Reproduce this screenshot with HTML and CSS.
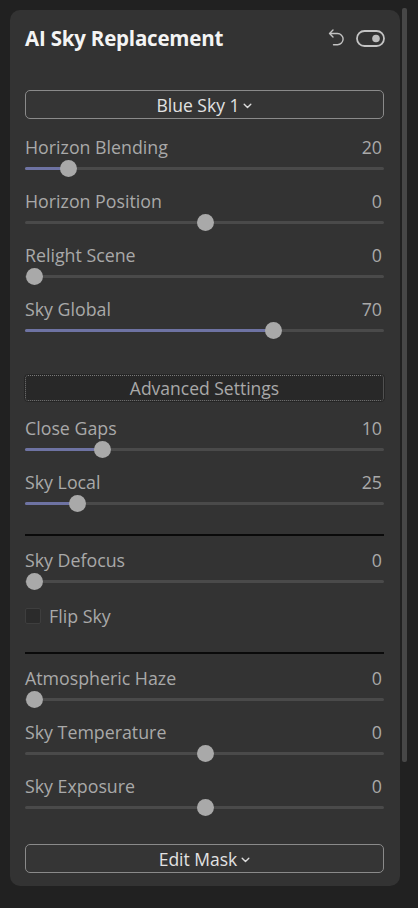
FILE: index.html
```html
<!DOCTYPE html>
<html>
<head>
<meta charset="utf-8">
<link rel="stylesheet" href="styles.css">
</head>
<body>
<div class="shell">
  <div class="panel">
    <div class="header">
      <div class="title">AI Sky Replacement</div>
      <div class="header-icons">
        <svg class="undo" width="18" height="20" viewBox="0 0 18 20"><path d="M6 2 L2.5 5.5 L6 9 M2.5 5.5 H10.5 A5.6 5.6 0 0 1 10.5 16.7 H6.5" fill="none" stroke="#c2c2c2" stroke-width="1.4" stroke-linecap="round" stroke-linejoin="round"/></svg>
        <svg class="toggle" width="29" height="17" viewBox="0 0 29 17"><rect x="1" y="1" width="27" height="15" rx="7.5" fill="none" stroke="#c4c4c4" stroke-width="1.8"/><circle cx="20" cy="8.5" r="3.8" fill="#bdbdbd"/></svg>
      </div>
    </div>

    <div class="btn dropdown first">Blue Sky 1<svg class="chev" width="9" height="6" viewBox="0 0 9 6"><path d="M1.2 1.2 L4.5 4.5 L7.8 1.2" fill="none" stroke="#dcdcdc" stroke-width="1.4" stroke-linecap="round" stroke-linejoin="round"/></svg></div>

    <div class="group g1">
      <div class="slider">
        <div class="row"><span>Horizon Blending</span><span>20</span></div>
        <div class="track"><div class="fill" style="width:43px"></div><div class="thumb" style="left:35px"></div></div>
      </div>
      <div class="slider">
        <div class="row"><span>Horizon Position</span><span>0</span></div>
        <div class="track"><div class="thumb" style="left:172px"></div></div>
      </div>
      <div class="slider">
        <div class="row"><span>Relight Scene</span><span>0</span></div>
        <div class="track"><div class="thumb" style="left:1px"></div></div>
      </div>
      <div class="slider">
        <div class="row"><span>Sky Global</span><span>70</span></div>
        <div class="track"><div class="fill" style="width:248px"></div><div class="thumb" style="left:240px"></div></div>
      </div>
    </div>

    <div class="btn advanced">Advanced Settings</div>

    <div class="group g2">
      <div class="slider">
        <div class="row"><span>Close Gaps</span><span>10</span></div>
        <div class="track"><div class="fill" style="width:77px"></div><div class="thumb" style="left:69px"></div></div>
      </div>
      <div class="slider">
        <div class="row"><span>Sky Local</span><span>25</span></div>
        <div class="track"><div class="fill" style="width:52px"></div><div class="thumb" style="left:44px"></div></div>
      </div>
    </div>

    <div class="divider d1"></div>

    <div class="group g3">
      <div class="slider">
        <div class="row"><span>Sky Defocus</span><span>0</span></div>
        <div class="track"><div class="thumb" style="left:1px"></div></div>
      </div>
    </div>

    <label class="check"><span class="box"></span><span>Flip Sky</span></label>

    <div class="divider d2"></div>

    <div class="group g4">
      <div class="slider">
        <div class="row"><span>Atmospheric Haze</span><span>0</span></div>
        <div class="track"><div class="thumb" style="left:1px"></div></div>
      </div>
      <div class="slider">
        <div class="row"><span>Sky Temperature</span><span>0</span></div>
        <div class="track"><div class="thumb" style="left:172px"></div></div>
      </div>
      <div class="slider">
        <div class="row"><span>Sky Exposure</span><span>0</span></div>
        <div class="track"><div class="thumb" style="left:172px"></div></div>
      </div>
    </div>

    <div class="btn dropdown mask">Edit Mask<svg class="chev" width="9" height="6" viewBox="0 0 9 6"><path d="M1.2 1.2 L4.5 4.5 L7.8 1.2" fill="none" stroke="#dcdcdc" stroke-width="1.4" stroke-linecap="round" stroke-linejoin="round"/></svg></div>
  </div>
  <div class="scrollbar"></div>
</div>
</body>
</html>
```

FILE: styles.css
```css
* { box-sizing: border-box; }
html, body { margin: 0; padding: 0; }
body {
  background: #212121;
  width: 418px;
  height: 908px;
  overflow: hidden;
  font-family: "Open Sans", "Noto Sans", sans-serif;
}
.shell {
  display: flex;
  align-items: flex-start;
  gap: 2px;
  padding: 10px 0 0 10px;
}
.panel {
  width: 390px;
  height: 876px;
  background: #333333;
  border-radius: 10px;
  padding: 16px 16px 0 15px;
  display: flex;
  flex-direction: column;
}
.scrollbar {
  width: 5px;
  height: 754px;
  margin-top: -2px;
  background: #474747;
  border-radius: 2px;
}
.header {
  height: 24px;
  display: flex;
  align-items: center;
  justify-content: space-between;
}
.title {
  color: #f4f4f4;
  font-size: 20.5px;
  font-weight: 700;
  letter-spacing: -0.2px;
}
.header-icons {
  display: flex;
  align-items: center;
  gap: 11px;
  margin-right: -1px;
}
.undo { display: block; }
.toggle { display: block; }
.btn {
  display: flex;
  align-items: center;
  justify-content: center;
  color: #e2e2e2;
  font-size: 17.5px;
  border-radius: 5px;
}
.dropdown {
  height: 29px;
  border: 1.5px solid #8a8a8a;
  background: #353535;
}
.chev { margin-left: 4px; margin-top: 2px; }
.first { margin-top: 40px; }
.group { display: flex; flex-direction: column; gap: 14px; }
.g1 { margin-top: 18px; }
.g2 { margin-top: 17px; }
.g3 { margin-top: 14px; }
.g4 { margin-top: 14px; }
.slider { height: 40px; display: flex; flex-direction: column; }
.row {
  height: 22px;
  display: flex;
  justify-content: space-between;
  align-items: center;
  color: #a9a9a9;
  font-size: 17.8px;
  padding-right: 2px;
  padding-bottom: 2px;
}
.track {
  position: relative;
  height: 3px;
  margin-top: 8px;
  background: #4a4a4a;
  border-radius: 2px;
}
.fill {
  height: 3px;
  background: #6e73a3;
  border-radius: 2px;
}
.thumb {
  position: absolute;
  top: -7px;
  width: 17px;
  height: 17px;
  border-radius: 50%;
  background: #a9a9a9;
}
.advanced {
  margin-top: 36px;
  height: 26px;
  background: #282828;
  border: 1.5px dotted #7a7a7a;
  outline: 1px solid #252525;
  border-radius: 3px;
  color: #a9a9a9;
}
.divider {
  height: 2px;
  background: #0a0a0a;
}
.d1 { margin-top: 22px; }
.d2 { margin-top: 28px; }
.check {
  margin-top: 18px;
  height: 16px;
  display: flex;
  align-items: center;
  gap: 8px;
  color: #a9a9a9;
  font-size: 17.8px;
}
.box {
  width: 16px;
  height: 16px;
  border: 1px solid #3e3e3e;
  background: #2b2b2b;
  border-radius: 2px;
}
.mask { margin-top: 28px; }
```
